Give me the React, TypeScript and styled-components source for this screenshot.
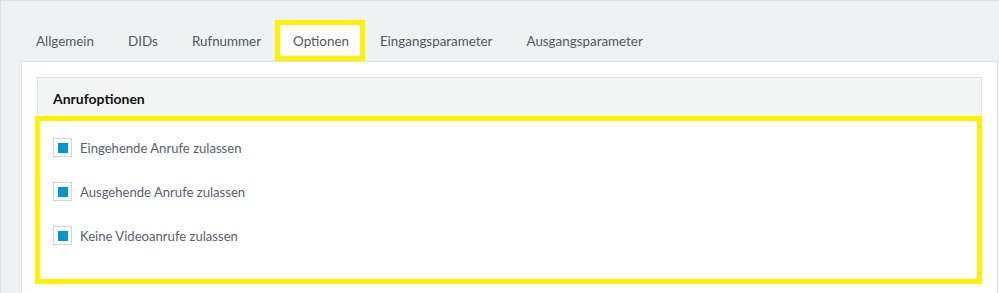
import React from 'react'
import styled, { createGlobalStyle } from 'styled-components'

const GlobalStyle = createGlobalStyle`
  html, body {
    margin: 0;
    padding: 0;
    background: #eef2f3;
  }
  body {
    font-family: Lato, "Liberation Sans", sans-serif;
    font-size: 13.4px;
  }
`

const Page = styled.div`
  height: 293px;
  box-sizing: border-box;
  border-top: 1px solid #dde4e6;
  border-left: 1px solid #dde4e6;
  padding: 19px 1px 0 20px;
  overflow: hidden;
`

const Tabs = styled.div`
  display: flex;
  align-items: stretch;
  height: 41px;
`

const Tab = styled.div<{ $active?: boolean }>`
  display: flex;
  align-items: center;
  box-sizing: border-box;
  padding: 1px 15px 0;
  margin-right: 4px;
  color: #4f5962;
  white-space: nowrap;
  ${p => p.$active && `
    background: #fff;
    border: 5px solid #fff200;
    padding: 0 11px 0 13px;
    margin: 0 0 0 -5px;
    position: relative;
    z-index: 1;
  `}
`

const Panel = styled.div`
  background: #fff;
  border: 1px solid #dce3e5;
  border-bottom: none;
  padding: 15px 15px 0;
  height: 300px;
`

const Card = styled.div`
  border: 1px solid #dce3e5;
  border-bottom: none;
`

const CardHeader = styled.div`
  background: #f4f6f6;
  height: 38px;
  display: flex;
  align-items: center;
  padding: 2px 15px 0;
  box-sizing: border-box;
  font-weight: 700;
  font-size: 14px;
  color: #111;
`

const CardBody = styled.div`
  border: 5px solid #fff200;
  margin: 0 -1px 0 -3px;
  height: 168px;
  box-sizing: border-box;
  padding: 17px 0 0 13px;
  display: flex;
  flex-direction: column;
  gap: 25px;
  background: #fff;
`

const Row = styled.label`
  display: flex;
  align-items: center;
  gap: 8px;
  color: #58626b;
  font-size: 13.1px;
`

const Check = styled.span`
  width: 19px;
  height: 19px;
  box-sizing: border-box;
  border: 1px solid #ccd6d9;
  display: flex;
  align-items: center;
  justify-content: center;
  background: #fff;

  &::after {
    content: '';
    width: 10px;
    height: 10px;
    background: #0096d6;
  }
`

const tabs = ['Allgemein', 'DIDs', 'Rufnummer', 'Optionen', 'Eingangsparameter', 'Ausgangsparameter']
const options = ['Eingehende Anrufe zulassen', 'Ausgehende Anrufe zulassen', 'Keine Videoanrufe zulassen']

const App: React.FC = () => (
  <>
    <GlobalStyle />
    <Page>
      <Tabs>
        {tabs.map(t => (
          <Tab key={t} $active={t === 'Optionen'}>{t}</Tab>
        ))}
      </Tabs>
      <Panel>
        <Card>
          <CardHeader>Anrufoptionen</CardHeader>
          <CardBody>
            {options.map(o => (
              <Row key={o}>
                <Check />
                {o}
              </Row>
            ))}
          </CardBody>
        </Card>
      </Panel>
    </Page>
  </>
)

export default App
